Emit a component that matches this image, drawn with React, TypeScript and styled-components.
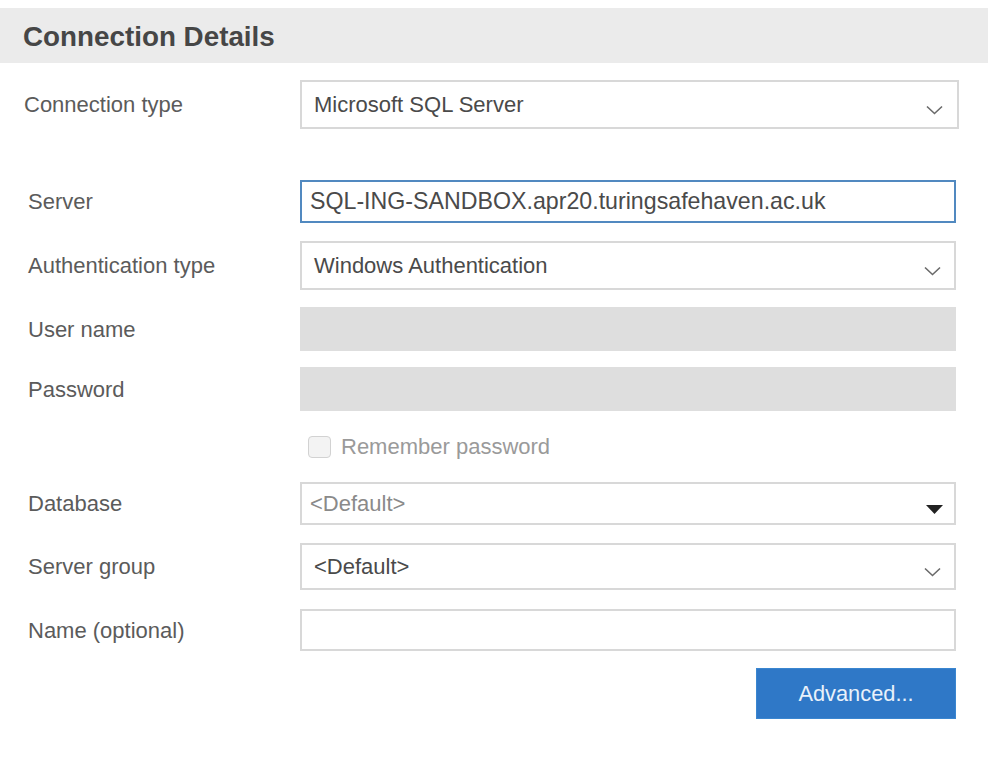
import React from "react";
import styled, { createGlobalStyle, css } from "styled-components";

const Global = createGlobalStyle`
  html, body { margin: 0; padding: 0; background: #ffffff; }
  body { font-family: "Liberation Sans", Arial, sans-serif; }
  * { box-sizing: border-box; }
`;

const Page = styled.div`
  width: 988px;
  min-height: 762px;
  padding-top: 8px;
  background: #fff;
`;

const Header = styled.div`
  height: 55px;
  background: #ebebeb;
  display: flex;
  align-items: center;
  padding-left: 23px;
  padding-top: 2px;
  font-size: 27.8px;
  font-weight: 700;
  color: #464646;
`;

const Form = styled.div`
  display: flex;
  flex-direction: column;
`;

const Row = styled.div<{ $top: number }>`
  display: grid;
  grid-template-columns: 300px auto;
  align-items: center;
  margin-top: ${(p) => p.$top}px;
`;

const Label = styled.div<{ $indent?: number }>`
  padding-left: ${(p) => p.$indent ?? 28}px;
  padding-top: 1px;
  font-size: 22px;
  color: #5b5b5b;
`;

const boxBase = css<{ $h: number; $w?: number }>`
  height: ${(p) => p.$h}px;
  width: ${(p) => p.$w ?? 656}px;
  display: flex;
  align-items: center;
  font-size: 22px;
`;

const SelectBox = styled.div<{ $h: number; $w?: number; $muted?: boolean; $pad?: number }>`
  ${boxBase};
  position: relative;
  border: 2px solid #d8d8d8;
  background: #fff;
  padding-left: ${(p) => p.$pad ?? 12}px;
  color: ${(p) => (p.$muted ? "#8a8a8a" : "#4a4a4a")};
`;

const TextInput = styled.div<{ $h: number; $w?: number; $focused?: boolean }>`
  ${boxBase};
  border: 2px solid ${(p) => (p.$focused ? "#5189c0" : "#d8d8d8")};
  background: #fff;
  padding-left: 8px;
  color: #4a4a4a;
  font-size: 23.2px;
`;

const DisabledInput = styled.div<{ $h: number; $w?: number }>`
  ${boxBase};
  background: #dedede;
`;

const Arrow = styled.span<{ $right: number; $dy: number }>`
  position: absolute;
  right: ${(p) => p.$right}px;
  top: 50%;
  margin-top: ${(p) => p.$dy}px;
  display: flex;
`;

const CheckRow = styled.div`
  display: flex;
  align-items: center;
  gap: 10px;
  margin-top: 23px;
  padding-left: 308px;
`;

const Checkbox = styled.span`
  width: 23px;
  height: 22px;
  border: 1.5px solid #d2d2d2;
  border-radius: 4px;
  background: #f3f3f3;
`;

const CheckLabel = styled.span`
  font-size: 22px;
  color: #9a9a9a;
`;

const ButtonRow = styled.div`
  display: flex;
  justify-content: flex-end;
  width: 956px;
  margin-top: 17px;
`;

const Button = styled.button`
  width: 200px;
  height: 51px;
  border: 1px solid #3a86d0;
  background: #2f78c7;
  color: #e9f1fa;
  font-family: "Liberation Sans", Arial, sans-serif;
  font-size: 21.8px;
  padding: 0;
`;

const Chevron = () => (
  <svg width="17" height="10" viewBox="0 0 17 10">
    <path d="M1 1.5 L8.5 8.5 L16 1.5" fill="none" stroke="#6a6a6a" strokeWidth="1.6" />
  </svg>
);

const Caret = () => (
  <svg width="17" height="9" viewBox="0 0 17 9">
    <path d="M0 0 H17 L8.5 9 Z" fill="#222" />
  </svg>
);

export default function App() {
  return (
    <Page>
      <Global />
      <Header>Connection Details</Header>
      <Form>
        <Row $top={17}>
          <Label $indent={24}>Connection type</Label>
          <SelectBox $h={49} $w={659}>
            Microsoft SQL Server
            <Arrow $right={14} $dy={0}><Chevron /></Arrow>
          </SelectBox>
        </Row>
        <Row $top={51}>
          <Label>Server</Label>
          <TextInput $h={43} $focused>SQL-ING-SANDBOX.apr20.turingsafehaven.ac.uk</TextInput>
        </Row>
        <Row $top={18}>
          <Label>Authentication type</Label>
          <SelectBox $h={49}>
            Windows Authentication
            <Arrow $right={13} $dy={0}><Chevron /></Arrow>
          </SelectBox>
        </Row>
        <Row $top={17}>
          <Label>User name</Label>
          <DisabledInput $h={44} />
        </Row>
        <Row $top={16}>
          <Label>Password</Label>
          <DisabledInput $h={44} />
        </Row>
        <CheckRow>
          <Checkbox />
          <CheckLabel>Remember password</CheckLabel>
        </CheckRow>
        <Row $top={22}>
          <Label>Database</Label>
          <SelectBox $h={43} $muted $pad={8}>
            &lt;Default&gt;
            <Arrow $right={11} $dy={1}><Caret /></Arrow>
          </SelectBox>
        </Row>
        <Row $top={18}>
          <Label>Server group</Label>
          <SelectBox $h={47}>
            &lt;Default&gt;
            <Arrow $right={13} $dy={0}><Chevron /></Arrow>
          </SelectBox>
        </Row>
        <Row $top={19}>
          <Label>Name (optional)</Label>
          <TextInput $h={42} />
        </Row>
        <ButtonRow>
          <Button>Advanced...</Button>
        </ButtonRow>
      </Form>
    </Page>
  );
}
